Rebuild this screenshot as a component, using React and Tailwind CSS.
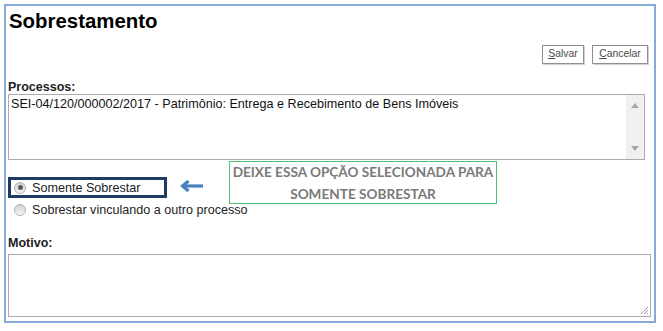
import React from "react";

function Radio({ checked }) {
  return (
    <span className="relative flex h-[12px] w-[12px] shrink-0 items-center justify-center rounded-full border border-[#b0b0b0] bg-gradient-to-b from-[#d4d4d4] to-[#f4f4f4]">
      {checked && <span className="h-[5px] w-[5px] rounded-full bg-[#5a5a5a]" />}
    </span>
  );
}

export default function App() {
  return (
    <div className="h-[331px] w-[663px] bg-white pl-[4px] pt-[4px] font-['Liberation_Sans',Arial,sans-serif] text-black">
      <div className="relative h-[319px] w-[652px] border-2 border-[#86abd9] px-[2px]">
        <h1 className="pl-[1px] pt-[2.5px] text-[20.4px] font-bold leading-[24px]">Sobrestamento</h1>

        <div className="mt-[12.5px] flex justify-end gap-[8px] pr-[4px]">
          <button className="flex h-[19px] w-[42px] items-center justify-center border border-[#8f8f8f] bg-white text-[10.4px] leading-none text-[#4a4a4a] shadow-[1px_1px_0_#d0d0d0]">
            <span className="underline">S</span>alvar
          </button>
          <button className="flex h-[19px] w-[56px] items-center justify-center border border-[#8f8f8f] bg-white text-[10.4px] leading-none text-[#4a4a4a] shadow-[1px_1px_0_#d0d0d0]">
            <span className="underline">C</span>ancelar
          </button>
        </div>

        <div className="mt-[16px] text-[12.5px] font-bold leading-[14px] text-[#222]">Processos:</div>
        <div className="relative flex h-[66px] w-[637px] border border-[#ababab] bg-white">
          <div className="flex-1 px-[2px] pt-[1.5px] text-[12.6px] leading-[14px] text-[#111]">
            SEI-04/120/000002/2017 - Patrimônio: Entrega e Recebimento de Bens Imóveis
          </div>
          <div className="flex w-[18px] flex-col items-center justify-between bg-[#f0f0f0] py-[8px]">
            <svg width="8" height="5" viewBox="0 0 8 5"><polygon points="4,0 8,5 0,5" fill="#a8a8a8" /></svg>
            <svg width="8" height="5" viewBox="0 0 8 5"><polygon points="0,0 8,0 4,5" fill="#a8a8a8" /></svg>
          </div>
        </div>

        <div className="mt-[17px] flex h-[21px] w-[159px] items-center gap-[6px] border-[3px] border-[#1f3b63] pl-[3px] text-[12.6px] leading-[14px] text-[#222]">
          <Radio checked />
          <span>Somente Sobrestar</span>
        </div>
        <div className="mt-[5px] flex h-[14px] items-center gap-[6px] pl-[6px] text-[12.6px] leading-[14px] text-[#222]">
          <Radio />
          <span>Sobrestar vinculando a outro processo</span>
        </div>

        <div className="mt-[19px] text-[12.5px] font-bold leading-[14px] text-[#222]">Motivo:</div>
        <div className="relative mt-[4px] h-[63px] w-[643px] border border-[#ababab] bg-white">
          <svg className="absolute bottom-[1px] right-[1px]" width="10" height="10" viewBox="0 0 10 10">
            <line x1="9" y1="2" x2="2" y2="9" stroke="#9a9a9a" strokeWidth="1" />
            <line x1="9" y1="5" x2="5" y2="9" stroke="#9a9a9a" strokeWidth="1" />
            <line x1="9" y1="8" x2="8" y2="9" stroke="#9a9a9a" strokeWidth="1" />
          </svg>
        </div>

        <svg className="absolute left-[174px] top-[174px]" width="24" height="12" viewBox="0 0 24 12">
          <path d="M23 6 H3" stroke="#4a7fc0" strokeWidth="3.2" fill="none" />
          <path d="M8.5 1 L2.5 6 L8.5 11" stroke="#4a7fc0" strokeWidth="3.2" fill="none" strokeLinejoin="miter" />
        </svg>

        <div className="absolute left-[223px] top-[155px] flex h-[43px] w-[268px] flex-col items-center justify-center border-[1.5px] border-[#4fbf72] bg-white font-['Lato','Open_Sans',sans-serif] text-[13.6px] font-bold leading-[22px] text-[#7a7a7a]">
          <span>DEIXE ESSA OPÇÃO SELECIONADA PARA</span>
          <span>SOMENTE SOBRESTAR</span>
        </div>
      </div>
    </div>
  );
}
